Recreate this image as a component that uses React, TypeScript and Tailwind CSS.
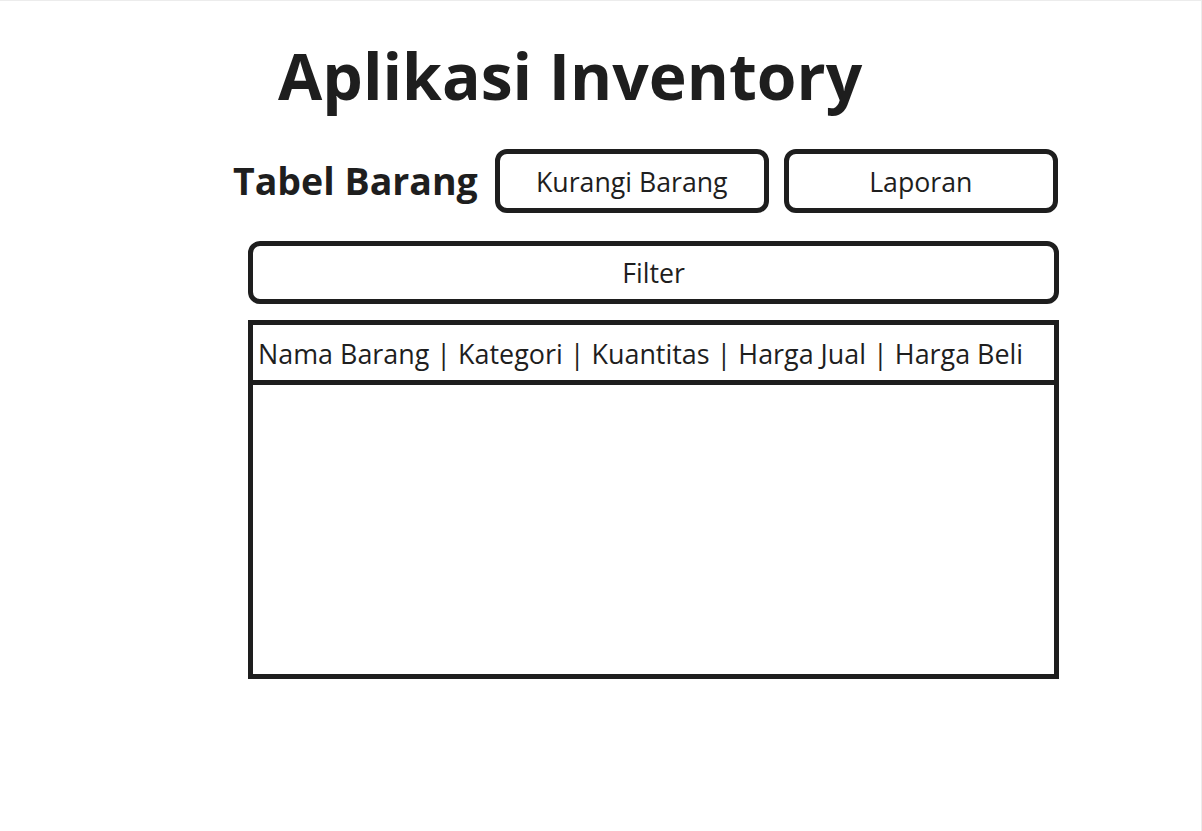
import React from 'react';

const columns = ['Nama Barang', 'Kategori', 'Kuantitas', 'Harga Jual', 'Harga Beli'];

export default function App() {
  return (
    <div className="min-h-screen w-full bg-white border-t border-r border-[#ececec] font-['Open_Sans',sans-serif] text-[#1e1e1e]">
      <div className="pl-[233px] pt-[42px]">
        {/* Judul */}
        <h1 className="ml-[45px] text-[64.2px] font-bold leading-none">Aplikasi Inventory</h1>

        {/* Baris menu */}
        <div className="mt-[42px] flex items-center">
          <h2 className="text-[37.5px] font-bold leading-none">Tabel Barang</h2>
          <button className="ml-[17px] h-[64px] w-[274px] rounded-[12px] border-[5px] border-[#1e1e1e] pt-[3px] text-[26.7px] leading-none">
            Kurangi Barang
          </button>
          <button className="ml-[15px] h-[64px] w-[274px] rounded-[12px] border-[5px] border-[#1e1e1e] pt-[3px] text-[26.7px] leading-none">
            Laporan
          </button>
        </div>

        <div className="ml-[15px] w-[811px]">
          <button className="mt-[28px] h-[63px] w-full rounded-[12px] border-[5px] border-[#1e1e1e] pt-[2px] text-[26.7px] leading-none">
            Filter
          </button>

          {/* Tabel */}
          <div className="mt-[16px] h-[359px] border-[5px] border-[#1e1e1e]">
            <div className="flex h-[60px] items-center border-b-[5px] border-[#1e1e1e] pl-[5px] pt-[3px] text-[26.9px] whitespace-nowrap">
              {columns.join(' | ')}
            </div>
          </div>
        </div>
      </div>
    </div>
  );
}
